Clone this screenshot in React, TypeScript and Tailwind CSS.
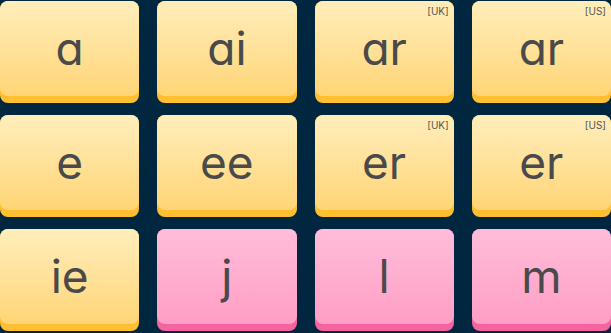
type Tile = {
  label: string;
  tag?: string;
  tone: 'yellow' | 'pink';
};

const TILES: Tile[] = [
  { label: 'a', tone: 'yellow' },
  { label: 'ai', tone: 'yellow' },
  { label: 'ar', tag: '[UK]', tone: 'yellow' },
  { label: 'ar', tag: '[US]', tone: 'yellow' },
  { label: 'e', tone: 'yellow' },
  { label: 'ee', tone: 'yellow' },
  { label: 'er', tag: '[UK]', tone: 'yellow' },
  { label: 'er', tag: '[US]', tone: 'yellow' },
  { label: 'ie', tone: 'yellow' },
  { label: 'j', tone: 'pink' },
  { label: 'l', tone: 'pink' },
  { label: 'm', tone: 'pink' },
];

function SoundTile({ label, tag, tone }: Tile) {
  const isPink = tone === 'pink';

  return (
    <div
      className={`h-[102px] rounded-lg pb-[7px] ${
        isPink ? 'bg-[#f5649f]' : 'bg-[#ffbf30]'
      }`}
    >
      <div
        className={`relative flex h-full items-center justify-center rounded-lg ${
          isPink
            ? 'bg-gradient-to-b from-[#ffbdd9] to-[#ff9ec6]'
            : 'bg-gradient-to-b from-[#ffeebb] to-[#ffd575]'
        }`}
      >
        <span className="pb-[2px] text-[46px] leading-none text-[#4a4a4a] [font-feature-settings:'cv11']">
          {label}
        </span>
        {tag && (
          <span className="absolute right-[5px] top-[5px] text-[10px] leading-none text-[#555]">
            {tag}
          </span>
        )}
      </div>
    </div>
  );
}

export default function App() {
  return (
    <div className="h-[333px] w-[611px] overflow-hidden bg-[#01263f] pt-px font-['Inter','Open_Sans',sans-serif]">
      <div className="grid grid-cols-4 gap-x-[18px] gap-y-[12px]">
        {TILES.map((tile, i) => (
          <SoundTile key={i} {...tile} />
        ))}
      </div>
    </div>
  );
}
